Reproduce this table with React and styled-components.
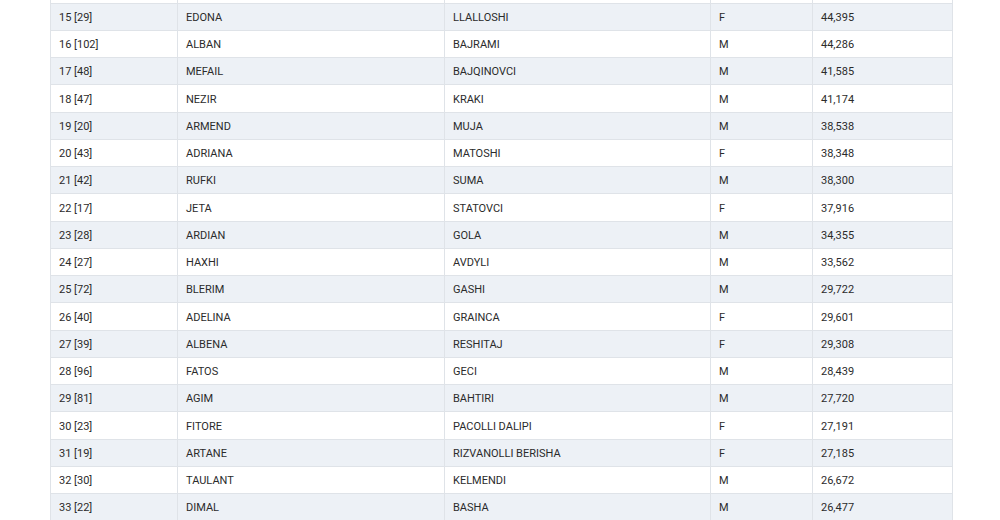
import React from "react"
import styled, { createGlobalStyle } from "styled-components"

// <========== DATA ==========>

// first row is the one scrolled just above the view; only its lower edge shows
const rows = [
  ["", "", "", "", ""],
  ["15 [29]", "EDONA", "LLALLOSHI", "F", "44,395"],
  ["16 [102]", "ALBAN", "BAJRAMI", "M", "44,286"],
  ["17 [48]", "MEFAIL", "BAJQINOVCI", "M", "41,585"],
  ["18 [47]", "NEZIR", "KRAKI", "M", "41,174"],
  ["19 [20]", "ARMEND", "MUJA", "M", "38,538"],
  ["20 [43]", "ADRIANA", "MATOSHI", "F", "38,348"],
  ["21 [42]", "RUFKI", "SUMA", "M", "38,300"],
  ["22 [17]", "JETA", "STATOVCI", "F", "37,916"],
  ["23 [28]", "ARDIAN", "GOLA", "M", "34,355"],
  ["24 [27]", "HAXHI", "AVDYLI", "M", "33,562"],
  ["25 [72]", "BLERIM", "GASHI", "M", "29,722"],
  ["26 [40]", "ADELINA", "GRAINCA", "F", "29,601"],
  ["27 [39]", "ALBENA", "RESHITAJ", "F", "29,308"],
  ["28 [96]", "FATOS", "GECI", "M", "28,439"],
  ["29 [81]", "AGIM", "BAHTIRI", "M", "27,720"],
  ["30 [23]", "FITORE", "PACOLLI DALIPI", "F", "27,191"],
  ["31 [19]", "ARTANE", "RIZVANOLLI BERISHA", "F", "27,185"],
  ["32 [30]", "TAULANT", "KELMENDI", "M", "26,672"],
  ["33 [22]", "DIMAL", "BASHA", "M", "26,477"],
]

// <========== COMPONENT ==========>

export default function App() {
  return (
    <Page>
      <GlobalStyle />
      <Table>
        {rows.map((row, index) => (
          <Row key={index} striped={index % 2 === 1}>
            {row.map((cell, i) => (
              <Cell key={i}>{cell}</Cell>
            ))}
          </Row>
        ))}
      </Table>
    </Page>
  )
}

// <========== STYLES ==========>

const GlobalStyle = createGlobalStyle`
  body {
    margin: 0;
    background: #fff;
    font-family: Roboto, "Liberation Sans", sans-serif;
  }
`

const Page = styled.div`
  width: 1000px;
  height: 520px;
  overflow: hidden;
  background: #fff;
`

const Table = styled.div`
  margin: -23.6px 0 0 50px;
  width: 903px;
`

const Row = styled.div.withConfig({ shouldForwardProp: (p) => p !== "striped" })`
  display: grid;
  grid-template-columns: 127px 267px 266px 102px 141px;
  height: 27.25px;
  box-sizing: border-box;
  border-bottom: 1px solid #dfe3e8;
  background: ${(p) => (p.striped ? "#edf1f6" : "#fff")};
`

const Cell = styled.div`
  display: flex;
  align-items: center;
  padding: 1px 8px 0;
  box-sizing: border-box;
  border-left: 1px solid #dfe3e8;
  font-size: 11px;
  color: #2b2b2b;
  white-space: nowrap;

  &:last-child {
    border-right: 1px solid #dfe3e8;
  }
`
